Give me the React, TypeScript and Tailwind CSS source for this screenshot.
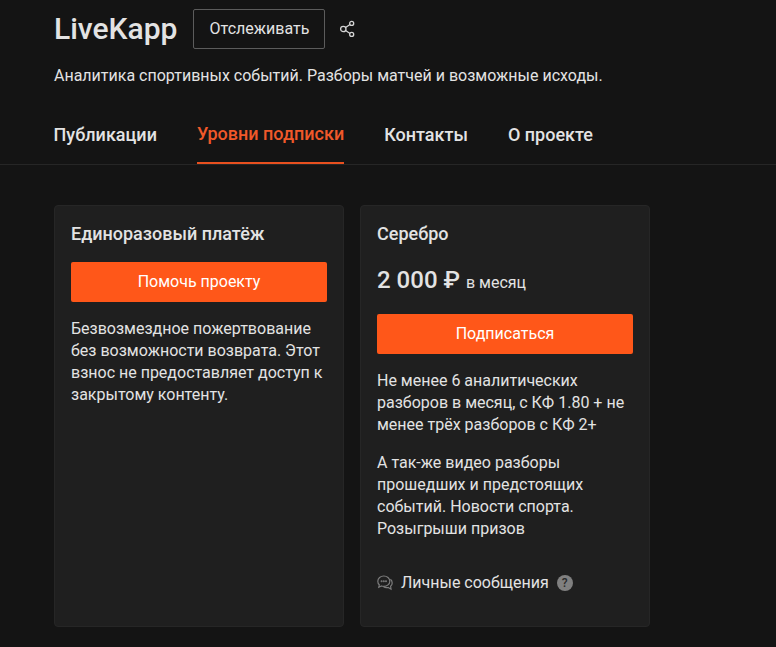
const tabs = [
  { label: "Публикации", active: false },
  { label: "Уровни подписки", active: true },
  { label: "Контакты", active: false },
  { label: "О проекте", active: false },
];

const ShareIcon = () => (
  <svg width="16" height="18" viewBox="0 0 16 18" fill="none" stroke="#d4d4d4" strokeWidth="1.3">
    <circle cx="4.300" cy="9" r="2.700" />
    <circle cx="12.700" cy="3.400" r="2" />
    <circle cx="12.700" cy="14.400" r="2" />
    <path d="M6.600 7.500l4.400-3M6.600 10.500l4.400 3" />
  </svg>
);

const ChatIcon = () => (
  <svg width="16" height="16" viewBox="0 0 16 16" fill="none" stroke="#7c7c7c" strokeWidth="1.2">
    <path d="M6.800 1c3.300 0 6 2.300 6 5.200s-2.700 5.200-6 5.200c-.8 0-1.600-.1-2.300-.4L1.800 12.300l.5-2.500C1.200 8.800.8 7.600.8 6.200.8 3.300 3.500 1 6.800 1z" />
    <path d="M13.400 4.300c1.100.9 1.800 2.200 1.800 3.600 0 1.300-.6 2.500-1.600 3.300l.4 3-2.900-1.700c-1.600.4-3.300.1-4.500-.7" />
    <circle cx="4.600" cy="6.200" r=".4" fill="#7c7c7c" />
    <circle cx="6.800" cy="6.200" r=".4" fill="#7c7c7c" />
    <circle cx="9" cy="6.200" r=".4" fill="#7c7c7c" />
  </svg>
);

export default function App() {
  return (
    <div className="h-[647px] overflow-hidden bg-[#141414] font-['Roboto',sans-serif] text-[#e3e3e3]">
      <div className="pl-[54px] pt-[9px]">
        <div className="flex items-center">
          <h1 className="text-[30px] leading-[40px] font-medium">LiveKapp</h1>
          <button className="ml-4 h-10 w-[132px] rounded-[2px] border border-[#5c5c5c] text-[16px]">Отслеживать</button>
          <span className="ml-[14px] flex"><ShareIcon /></span>
        </div>
        <p className="mt-[17px] text-[16px] leading-5">
          Аналитика спортивных событий. Разборы матчей и возможные исходы.
        </p>
      </div>

      <nav className="mt-6 flex gap-10 border-b border-[#262626] pl-[53.6px]">
        {tabs.map((tab) => (
          <div
            key={tab.label}
            className={
              tab.active
                ? "flex h-[54px] items-center border-b-2 border-[#e8501f] pb-[5px] text-[18px] font-medium text-[#f0592a]"
                : "flex h-[54px] items-center pb-[5px] text-[18px] font-medium"
            }
          >
            {tab.label}
          </div>
        ))}
      </nav>

      <div className="mt-10 flex gap-4 pl-[54px]">
        <div className="h-[422px] w-[290px] rounded border border-[#262626] bg-[#1f1f1f] px-4 pt-[17px]">
          <h2 className="text-[18px] leading-[22px] font-medium">Единоразовый платёж</h2>
          <button className="mt-[17px] h-10 w-full rounded-[2px] bg-[#ff5719] text-[16px] text-white">Помочь проекту</button>
          <p className="mt-4 text-[16px] leading-[22px]">
            Безвозмездное пожертвование без возможности возврата. Этот взнос не предоставляет доступ к закрытому контенту.
          </p>
        </div>

        <div className="h-[422px] w-[290px] rounded border border-[#262626] bg-[#1f1f1f] px-4 pt-[17px]">
          <h2 className="text-[18px] leading-[22px] font-medium">Серебро</h2>
          <div className="mt-[21px] flex items-baseline gap-[6px]">
            <span className="text-[24px] leading-7 font-medium">2 000 ₽</span>
            <span className="text-[16px]">в месяц</span>
          </div>
          <button className="mt-[19px] h-10 w-full rounded-[2px] bg-[#ff5719] text-[16px] text-white">Подписаться</button>
          <p className="mt-4 text-[16px] leading-[22px]">
            Не менее 6 аналитических разборов в месяц, с КФ 1.80 + не менее трёх разборов с КФ 2+
          </p>
          <p className="mt-4 text-[16px] leading-[22px]">
            А так-же видео разборы прошедших и предстоящих событий. Новости спорта. Розыгрыши призов
          </p>
          <div className="mt-[33px] flex items-center">
            <ChatIcon />
            <span className="ml-2 text-[16px] leading-5">Личные сообщения</span>
            <span className="ml-2 flex h-4 w-4 items-center justify-center rounded-full bg-[#808080] text-[12px] font-medium text-[#2a2a2a]">?</span>
          </div>
        </div>
      </div>
    </div>
  );
}
